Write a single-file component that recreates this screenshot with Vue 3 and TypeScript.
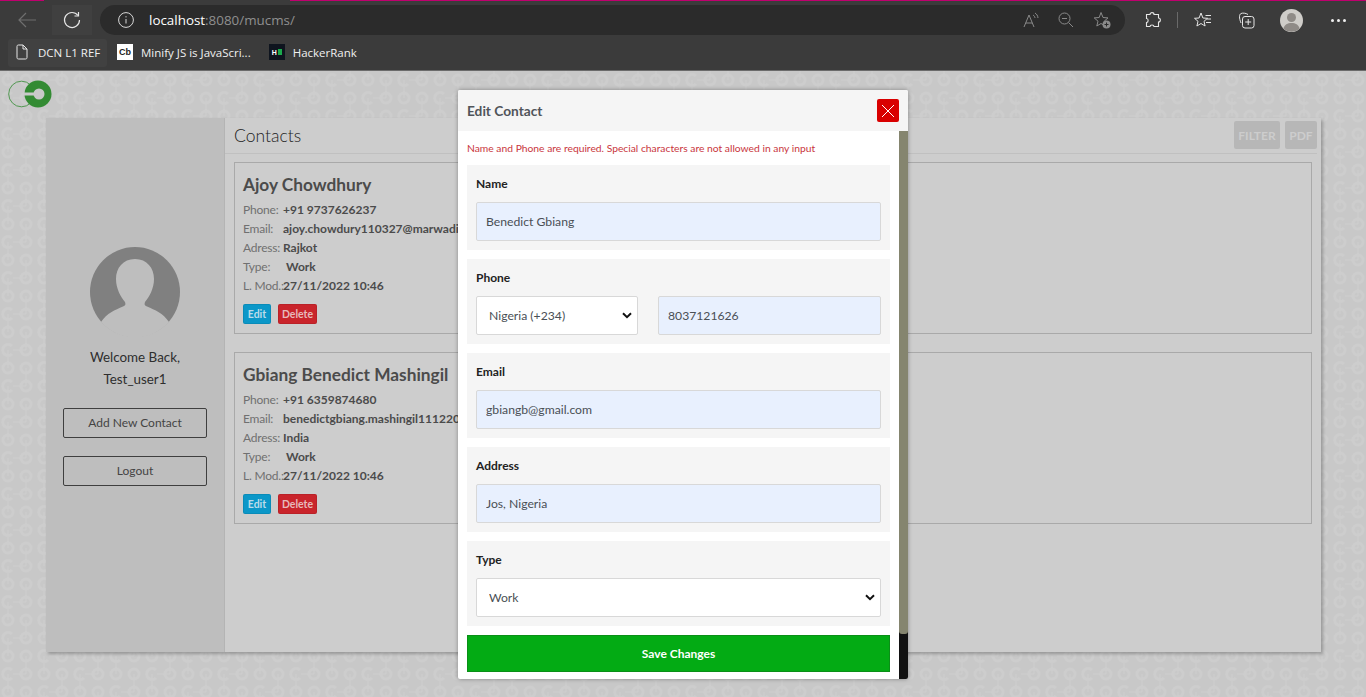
<script setup lang="ts">
interface Contact {
  name: string;
  phone: string;
  email: string;
  address: string;
  type: string;
  modified: string;
}

const contacts: Contact[] = [
  {
    name: 'Ajoy Chowdhury',
    phone: '+91 9737626237',
    email: 'ajoy.chowdury110327@marwadiuniversity.ac.in',
    address: 'Rajkot',
    type: 'Work',
    modified: '27/11/2022 10:46'
  },
  {
    name: 'Gbiang Benedict Mashingil',
    phone: '+91 6359874680',
    email: 'benedictgbiang.mashingil111220@marwadiuniversity.ac.in',
    address: 'India',
    type: 'Work',
    modified: '27/11/2022 10:46'
  }
];
</script>

<template>
  <div class="window">
    <header class="browser">
      <div class="tabline"><i></i><b></b><i></i></div>
      <div class="toolbar">
        <span class="tool back">
          <svg width="20" height="16" viewBox="0 0 20 16" fill="none" stroke="#6f6f6f" stroke-width="1.2"><path d="M1 8h17M8 1 1 8l7 7" /></svg>
        </span>
        <span class="tool reload">
          <svg width="18" height="18" viewBox="0 0 18 18" fill="none" stroke="#e6e6e6" stroke-width="1.2"><path d="M15 4.500A7.500 7.500 0 1 0 16.500 9" /><path d="M15.500 1v4h-4" /></svg>
        </span>
        <div class="address">
          <svg class="info" width="16" height="16" viewBox="0 0 16 16" fill="none" stroke="#d8d8d8" stroke-width="1"><circle cx="8" cy="8" r="7.400" /><path d="M8 7v4.500M8 4.200v1.200" /></svg>
          <span class="url"><span class="host">localhost</span>:8080/mucms/</span>
          <span class="address-icons">
            <svg width="16" height="16" viewBox="0 0 16 16" fill="none" stroke="#8a8a8a" stroke-width="1"><path d="M1 15 6 3l5 12M2.800 11h6.400M10 3c1.300.8 1.900 1.800 2 3M12 1c1.500 1 2.800 2.500 3 5" /></svg>
            <svg width="16" height="16" viewBox="0 0 16 16" fill="none" stroke="#8a8a8a" stroke-width="1"><circle cx="6.500" cy="6.500" r="5.500" /><path d="M10.500 10.500 15 15M4 6.500h5" /></svg>
            <svg width="18" height="18" viewBox="0 0 18 18" fill="none" stroke="#8a8a8a" stroke-width="1"><path d="M8 1.500 10 6.500l5 .4-3.800 3.300 1.200 4.800L8 12.500 3.800 15l1.200-4.800L1.200 6.900l5-.4z" /><circle cx="13.500" cy="13.500" r="4" fill="#8a8a8a" stroke="none" /><path d="M11.500 13.500h4M13.500 11.500v4" stroke="#2b2b2b" /></svg>
          </span>
        </div>
        <div class="browser-icons">
          <svg class="puzzle" width="16" height="18" viewBox="0 0 16 18" fill="none" stroke="#e6e6e6" stroke-width="1.100"><path d="M5 3.500C5 1 9 1 9 3.500h4.500V7c2.500 0 2.500 4 0 4v4.500H9c0-2-4-2-4 0H1.500V11.500c2.200 0 2.200-4 0-4V3.500z" /></svg>
          <span class="divider"></span>
          <svg class="favs" width="18" height="17" viewBox="0 0 18 17" fill="none" stroke="#e6e6e6" stroke-width="1"><path d="M7 1 8.900 6l4.600.3-3.500 3 1.100 4.700L7 11.500 2.900 14l1.100-4.700-3.500-3L5.100 6zM11.500 3.500H17M13 7h4M12 10.500h5" /></svg>
          <svg class="coll" width="17" height="17" viewBox="0 0 17 17" fill="none" stroke="#e6e6e6" stroke-width="1"><path d="M3 11C1 6 1 2.500 3 1.500c1.500-.7 5-.5 7 1" /><rect x="4.500" y="4.500" width="11.500" height="11.500" rx="2.500" /><path d="M10.200 7v6M7.200 10h6" /></svg>
          <svg class="profile" width="23" height="23" viewBox="0 0 23 23"><circle cx="11.500" cy="11.500" r="11.500" fill="#cfcdc9" /><circle cx="11.500" cy="8.500" r="4.500" fill="#8f8b87" /><path d="M3.500 19.500c1-4 4-5.500 8-5.500s7 1.500 8 5.500a11.500 11.500 0 0 1-16 0z" fill="#8f8b87" /></svg>
          <span class="dots"><i></i><i></i><i></i></span>
        </div>
      </div>
      <nav class="bookmarks">
        <span class="mark active">
          <svg width="12" height="16" viewBox="0 0 12 16" fill="none" stroke="#e8e8e8" stroke-width="1"><path d="M1 2.500C1 1.500 1.500 1 2.500 1H7l4 4v8.500c0 1-.5 1.500-1.500 1.500h-7c-1 0-1.500-.5-1.500-1.500zM7 1v4h4" /></svg>
          DCN L1 REF
        </span>
        <span class="mark">
          <span class="fav cb">Cb</span>
          Minify JS is JavaScri...
        </span>
        <span class="mark">
          <span class="fav hr"><b>H</b><i></i></span>
          HackerRank
        </span>
      </nav>
    </header>

    <main class="page">
      <div class="logo-row">
        <svg width="44" height="28" viewBox="0 0 44 28">
          <circle cx="13.500" cy="14" r="12.800" fill="none" stroke="#338b33" stroke-width="0.8" />
          <circle cx="30" cy="14" r="13.500" fill="#338b33" />
          <circle cx="31" cy="14" r="5.500" fill="#c9c9c9" />
          <rect x="16" y="12.500" width="14" height="3" fill="#c9c9c9" />
        </svg>
      </div>

      <section class="shell">
        <aside class="side">
          <svg class="avatar" width="90" height="90" viewBox="0 0 90 90">
            <circle cx="45" cy="45" r="45" fill="#808080" />
            <path d="M45 12C33 12 26 21 26 32 26 42 31 50 35 55 36 58 35 58.500 33 59.500 25 63 17 66 11 75 A45 45 0 0 0 79 75C73 66 65 63 57 59.500 55 58.500 54 58 55 55 59 50 64 42 64 32 64 21 57 12 45 12Z" fill="#bebebe" />
          </svg>
          <p class="welcome">Welcome Back,<br />Test_user1</p>
          <a class="side-btn">Add New Contact</a>
          <a class="side-btn">Logout</a>
        </aside>

        <div class="content">
          <div class="content-head">
            <h1>Contacts</h1>
            <div class="head-actions">
              <span class="ghost filter">FILTER</span>
              <span class="ghost pdf">PDF</span>
            </div>
          </div>
          <div class="cards">
            <article v-for="c in contacts" :key="c.name" class="card">
              <h2>{{ c.name }}</h2>
              <dl>
                <dt>Phone:</dt><dd>{{ c.phone }}</dd>
                <dt>Email:</dt><dd>{{ c.email }}</dd>
                <dt>Adress:</dt><dd>{{ c.address }}</dd>
                <dt>Type:</dt><dd class="indent">{{ c.type }}</dd>
                <dt>L. Mod.:</dt><dd>{{ c.modified }}</dd>
              </dl>
              <div class="card-actions">
                <button class="mini edit">Edit</button>
                <button class="mini del">Delete</button>
              </div>
            </article>
          </div>
        </div>
      </section>

      <div class="modal">
        <div class="modal-head">
          <span class="modal-title">Edit Contact</span>
          <button class="close" aria-label="Close">
            <svg width="14" height="14" viewBox="0 0 14 14" stroke="#fff" stroke-width="1"><path d="M1 1l12 12M13 1 1 13" /></svg>
          </button>
        </div>
        <div class="modal-main">
          <form class="modal-body" @submit.prevent>
            <p class="hint">Name and Phone are required. Special characters are not allowed in any input</p>
            <div class="group">
              <label>Name</label>
              <input class="field filled" value="Benedict Gbiang" />
            </div>
            <div class="group">
              <label>Phone</label>
              <div class="phone-row">
                <select class="field pick"><option>Nigeria (+234)</option></select>
                <input class="field filled" value="8037121626" />
              </div>
            </div>
            <div class="group">
              <label>Email</label>
              <input class="field filled" value="gbiangb@gmail.com" />
            </div>
            <div class="group">
              <label>Address</label>
              <input class="field filled" value="Jos, Nigeria" />
            </div>
            <div class="group">
              <label>Type</label>
              <select class="field pick"><option>Work</option></select>
            </div>
            <button class="save">Save Changes</button>
          </form>
          <div class="scrollbar"><div class="thumb"></div></div>
        </div>
      </div>
    </main>
  </div>
</template>

<style scoped>
.window {
  height: 697px;
  display: flex;
  flex-direction: column;
  overflow: hidden;
  font-family: Lato, "Noto Sans", sans-serif;
}

/* browser chrome */
.browser {
  height: 71px;
  flex: none;
  background: #3b3b3b;
  border-bottom: 1px solid #6b6b6b;
  box-sizing: border-box;
  font-family: "Open Sans", "Noto Sans", sans-serif;
  color: #f0f0f0;
}
.tabline {
  display: flex;
  height: 1px;
}
.tabline i {
  background: #c0006e;
  flex: 1;
}
.tabline i:first-child {
  flex: 0 0 44px;
}
.tabline b {
  flex: 0 0 246px;
}
.toolbar {
  display: flex;
  align-items: center;
  height: 30px;
  margin-top: 4px;
  padding-left: 8px;
}
.tool {
  width: 40px;
  height: 30px;
  display: flex;
  align-items: center;
  justify-content: center;
}
.tool.reload {
  margin-left: 4px;
  background: #404040;
}
.address {
  width: 1025px;
  height: 30px;
  margin-left: 8px;
  border-radius: 15px;
  background: #2b2b2b;
  display: flex;
  align-items: center;
  box-sizing: border-box;
  padding-left: 18px;
}
.url {
  margin: -1px 0 0 15px;
  font-size: 13.400px;
  color: #8f8f8f;
}
.host {
  color: #fff;
}
.address-icons {
  margin-left: auto;
  display: flex;
  align-items: center;
  gap: 19px;
  margin-right: 14px;
}
.browser-icons {
  display: flex;
  align-items: center;
  margin-left: 20px;
}
.divider {
  width: 1px;
  height: 16px;
  background: #6a6a6a;
  margin: 0 16px;
}
.coll {
  margin-left: 26px;
}
.profile {
  margin-left: 25px;
}
.dots {
  display: flex;
  gap: 3px;
  margin-left: 28px;
}
.dots i {
  width: 3px;
  height: 3px;
  border-radius: 50%;
  background: #f0f0f0;
}
.bookmarks {
  display: flex;
  align-items: center;
  height: 28px;
  margin-top: 4px;
  padding-left: 8px;
  font-size: 11.500px;
}
.mark {
  height: 28px;
  box-sizing: border-box;
  display: flex;
  align-items: center;
  gap: 8px;
  padding: 0 6px 2px 8px;
  white-space: nowrap;
}
.mark.active {
  background: #414141;
  border-radius: 3px;
  width: 99px;
  gap: 10px;
}
.mark:nth-child(2) {
  margin-left: 2px;
}
.mark:nth-child(3) {
  margin-left: 4px;
}
.fav {
  width: 16px;
  height: 16px;
  display: flex;
  align-items: center;
  justify-content: center;
}
.fav.cb {
  background: #fff;
  color: #222;
  font: 700 9px "Liberation Sans", sans-serif;
}
.fav.hr {
  background: #0e141e;
  gap: 1px;
}
.fav.hr b {
  font: 700 7px "Liberation Sans", sans-serif;
  color: #fff;
}
.fav.hr i {
  width: 4px;
  height: 6px;
  background: #1ba94c;
}

/* page */
.page {
  position: relative;
  flex: 1;
  background-color: #c8c8c8;
  background-image: url("data:image/svg+xml,%3Csvg xmlns='http://www.w3.org/2000/svg' width='72' height='36'%3E%3Cg fill='none' stroke='%23cdcdcd' stroke-width='3'%3E%3Ccircle cx='44' cy='27' r='5'/%3E%3Ccircle cx='62' cy='27' r='5'/%3E%3Cpath d='M12 23a5.500 5.500 0 1 0 0 8'/%3E%3Ccircle cx='26' cy='27' r='5'/%3E%3Ccircle cx='8' cy='9' r='5'/%3E%3Ccircle cx='26' cy='9' r='5'/%3E%3Cpath d='M48 5a5.500 5.500 0 1 0 0 8'/%3E%3Ccircle cx='62' cy='9' r='5'/%3E%3C/g%3E%3Cg fill='none' stroke='%23cdcdcd' stroke-width='1.500'%3E%3Cpath d='M13 27h13M49 9h13M44 9v18M62 0v9M8 0v9M26 9v18M8 27v9M62 27v9'/%3E%3C/g%3E%3C/svg%3E");
  display: flex;
  flex-direction: column;
}
.logo-row {
  height: 47px;
  padding: 9px 0 0 8px;
  box-sizing: border-box;
}
.shell {
  width: 1275px;
  height: 534px;
  margin-left: 46px;
  display: flex;
  background: #cdcdcd;
  box-shadow: 2px 2px 3px rgba(0, 0, 0, 0.25);
}
.side {
  width: 179px;
  flex: none;
  background: #bebebe;
  border-right: 1px solid #b4b4b4;
  box-sizing: border-box;
  display: flex;
  flex-direction: column;
  align-items: center;
  padding-top: 129px;
}
.avatar {
  display: block;
}
.welcome {
  margin: 9px 0 0;
  font-size: 13.400px;
  line-height: 22px;
  text-align: center;
  color: #2e2e2e;
}
.side-btn {
  width: 144px;
  height: 30px;
  box-sizing: border-box;
  border: 1px solid #3f3f3f;
  border-radius: 2px;
  margin-top: 18px;
  padding-bottom: 2px;
  display: flex;
  align-items: center;
  justify-content: center;
  font-size: 12px;
  color: #444;
}
.content {
  flex: 1;
}
.content-head {
  height: 35px;
  margin-right: 4px;
  display: flex;
  align-items: flex-start;
  justify-content: space-between;
  border-bottom: 1px solid #c0c0c0;
  padding-left: 9px;
}
h1 {
  margin: 5px 0 0;
  font-size: 17.500px;
  font-weight: 300;
  line-height: 25px;
  color: #222;
}
.head-actions {
  display: flex;
  gap: 5px;
  padding-top: 3px;
}
.ghost {
  height: 28px;
  background: #b7b7b7;
  border-radius: 2px;
  color: #cdcdcd;
  font-size: 12px;
  font-weight: 700;
  line-height: 29px;
  text-align: center;
}
.ghost.filter {
  width: 46px;
}
.ghost.pdf {
  width: 32px;
}
.cards {
  display: flex;
  flex-direction: column;
  gap: 18px;
  padding: 8px 9px 0;
}
.card {
  height: 172px;
  box-sizing: border-box;
  border: 1px solid #a9a9a9;
  padding: 10px 8px 0;
  color: #4b4b4b;
}
h2 {
  margin: 0;
  font-size: 17.300px;
  line-height: 24px;
  font-weight: 700;
}
dl {
  margin: 3px 0 0;
  display: grid;
  grid-template-columns: 40px 1fr;
  grid-auto-rows: 19px;
  align-items: center;
  font-size: 12px;
}
dt {
  color: #707070;
  white-space: nowrap;
  letter-spacing: -0.2px;
}
dd {
  margin: 0;
  font-weight: 700;
  white-space: nowrap;
}
dd.indent {
  padding-left: 3px;
}
.card-actions {
  display: flex;
  gap: 7px;
  margin-top: 9px;
}
.mini {
  height: 20px;
  padding: 0;
  border: 1px solid rgba(0, 0, 0, 0.08);
  border-radius: 2px;
  font: 700 10.500px Lato, sans-serif;
}
.mini.edit {
  width: 28px;
  background: #0b97c8;
  color: #bcdcea;
}
.mini.del {
  width: 39px;
  background: #c9242b;
  color: #e6b9bb;
}

/* modal */
.modal {
  position: absolute;
  left: 458px;
  top: 19px;
  width: 450px;
  height: 589px;
  border-radius: 2px;
  background: #fff;
  box-shadow: 0 0 4px rgba(0, 0, 0, 0.35);
  display: flex;
  flex-direction: column;
  overflow: hidden;
}
.modal-head {
  height: 41px;
  flex: none;
  background: #f5f5f5;
  display: flex;
  align-items: center;
  justify-content: space-between;
  padding: 0 9px;
}
.modal-title {
  font-size: 13.700px;
  font-weight: 700;
  color: #50545a;
  margin-top: -1px;
}
.close {
  width: 22px;
  height: 23px;
  border: 0;
  padding: 0;
  border-radius: 2px;
  background: #d90000;
  display: flex;
  align-items: center;
  justify-content: center;
}
.modal-main {
  flex: 1;
  display: flex;
  min-height: 0;
}
.modal-body {
  flex: 1;
  padding: 0 9px;
  display: flex;
  flex-direction: column;
  gap: 9px;
}
.hint {
  margin: 11px 0 1px;
  font-size: 10.300px;
  line-height: 13px;
  color: #c9363d;
}
.group {
  height: 85px;
  box-sizing: border-box;
  background: #f5f5f5;
  padding: 10px 9px 0;
}
label {
  display: block;
  font-size: 12px;
  line-height: 17px;
  font-weight: 700;
  color: #222;
  margin-bottom: 10px;
}
.field {
  display: block;
  width: 100%;
  height: 39px;
  box-sizing: border-box;
  border: 1px solid #d8d8d8;
  border-radius: 2px;
  padding: 0 9px;
  font: 400 12.200px Lato, sans-serif;
  color: #4a4f55;
  outline: none;
}
.filled {
  background: #e8f0fe;
}
select.field {
  appearance: none;
  padding-left: 12px;
  background: #fff url("data:image/svg+xml,%3Csvg xmlns='http://www.w3.org/2000/svg' width='10' height='7'%3E%3Cpath d='M1 1.200l4 4 4-4' fill='none' stroke='%23111' stroke-width='2'/%3E%3C/svg%3E") no-repeat right 5px center;
}
.phone-row {
  display: grid;
  grid-template-columns: 162px 1fr;
  gap: 20px;
}
.phone-row .field {
  min-width: 0;
}
.save {
  height: 37px;
  border: 1px solid #0a8f17;
  background: #03ab14;
  color: #fff;
  font: 700 12px Lato, sans-serif;
}
.scrollbar {
  width: 9px;
  flex: none;
  background: #111;
}
.thumb {
  height: 503px;
  background: #85856f;
  border-radius: 0 0 3px 3px;
}
</style>

<style>
html,
body {
  margin: 0;
  overflow: hidden;
}
</style>
